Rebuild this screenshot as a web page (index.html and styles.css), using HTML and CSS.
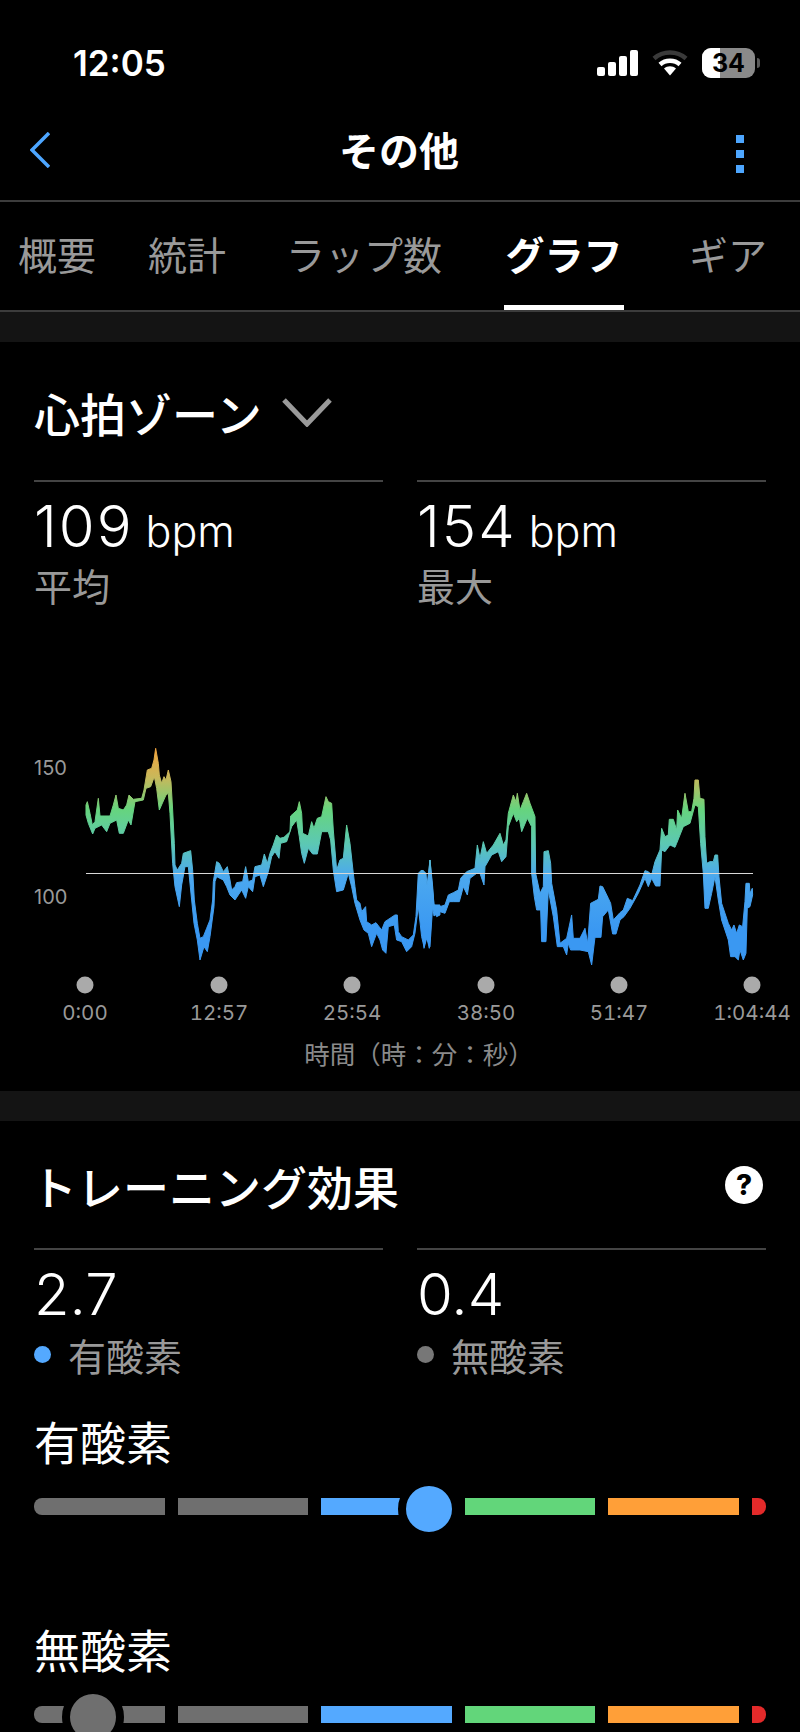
FILE: index.html
```html
<!DOCTYPE html>
<html lang="ja">
<head>
	<meta charset="UTF-8">
	<title>その他</title>
	<link rel="stylesheet" href="styles.css">
</head>
<body>
	<div class="status">
		<span class="clock">12:05</span>
		<div class="status-icons">
			<svg class="signal" width="42" height="26" viewBox="0 0 42 26">
				<rect x="0" y="17" width="8" height="9" rx="2"/>
				<rect x="11" y="12" width="8" height="14" rx="2"/>
				<rect x="22" y="6" width="8" height="20" rx="2"/>
				<rect x="33" y="0" width="8" height="26" rx="2"/>
			</svg>
			<svg class="wifi" width="36" height="26" viewBox="0 0 36 26">
				<path d="M2 8.500C11 0.500 25 0.500 34 8.500" fill="none" stroke="#3a3a3a" stroke-width="4.500"/>
				<path d="M8 14.500C13.500 9.500 22.500 9.500 28 14.500" fill="none" stroke="#fff" stroke-width="4.500"/>
				<path d="M12 18.500C15.500 15.500 20.500 15.500 24 18.500L18 25.500Z" fill="#fff"/>
			</svg>
			<div class="battery">
				<div class="battery-fill"></div>
				<span class="battery-num">34</span>
			</div>
			<div class="battery-cap"></div>
		</div>
	</div>

	<div class="nav">
		<svg class="back" width="20" height="36" viewBox="0 0 20 36">
			<path d="M19 1L2 18L19 35" fill="none" stroke="#4da6ff" stroke-width="3.500"/>
		</svg>
		<span class="nav-title">その他</span>
		<div class="more">
			<span></span>
			<span></span>
			<span></span>
		</div>
	</div>

	<div class="tabs">
		<span class="tab">概要</span>
		<span class="tab tab-stats">統計</span>
		<span class="tab">ラップ数</span>
		<span class="tab active">グラフ</span>
		<span class="tab tab-gear">ギア</span>
	</div>

	<div class="band"></div>

	<section class="card">
		<div class="card-title heart-title">
			<span>心拍ゾーン</span>
			<svg width="50" height="30" viewBox="0 0 50 30">
				<path d="M2 3L25 27L48 3" fill="none" stroke="#9a9a9a" stroke-width="5"/>
			</svg>
		</div>
		<div class="stats">
			<div class="stat">
				<div class="value value-bpm">109<span class="unit">bpm</span></div>
				<div class="label">平均</div>
			</div>
			<div class="stat">
				<div class="value value-bpm">154<span class="unit">bpm</span></div>
				<div class="label">最大</div>
			</div>
		</div>
	</section>

	<svg class="chart" width="800" height="433" viewBox="0 607 800 433">
		<defs>
			<linearGradient id="hr" gradientUnits="userSpaceOnUse" x1="0" y1="50" x2="0" y2="700">
				<stop offset="0" stop-color="#f5a33c"/>
				<stop offset="0.14" stop-color="#c9b85a"/>
				<stop offset="0.29" stop-color="#66d47e"/>
				<stop offset="0.45" stop-color="#5cc8b4"/>
				<stop offset="0.6" stop-color="#4ba8ef"/>
				<stop offset="0.85" stop-color="#3a98f2"/>
			</linearGradient>
		</defs>
		<text class="axis-y" x="34" y="775">150</text>
		<text class="axis-y" x="34" y="904">100</text>
		<g transform="translate(60 730) scale(0.3333)">
			<polygon class="trace" points="78,225 82,215 90,250 97,285 105,275 115,205 120,258 135,258 150,258 160,225 168,195 175,235 190,240 200,225 207,195 220,208 245,205 252,180 262,120 275,115 282,90 287,55 295,100 298,135 305,160 312,140 318,150 325,120 333,155 338,240 343,340 345,405 352,420 365,400 370,370 392,362 398,420 403,510 412,580 420,625 430,620 440,595 450,570 458,510 460,455 470,395 478,400 490,425 502,410 510,450 515,480 525,470 530,458 548,455 557,410 565,455 578,450 585,410 605,405 613,372 622,400 630,370 640,345 650,315 660,325 672,322 690,305 692,258 712,240 718,215 725,250 728,310 745,318 755,275 762,295 772,265 785,260 798,200 805,215 815,220 820,300 825,360 830,420 840,390 850,385 860,285 870,340 880,430 885,470 890,510 900,520 905,545 917,530 920,575 935,585 948,578 965,600 975,575 1005,555 1012,555 1015,605 1025,620 1045,630 1060,615 1068,560 1075,430 1085,420 1095,430 1100,480 1110,390 1118,480 1122,525 1140,525 1140,555 1130,560 1118,530 1112,620 1108,655 1100,620 1092,650 1085,620 1075,530 1065,610 1055,650 1040,665 1025,635 1010,630 1003,585 985,590 978,670 968,660 960,630 950,610 935,650 925,610 912,600 900,570 885,520 875,470 865,430 850,480 830,485 820,420 812,330 805,305 785,305 772,372 758,372 745,355 733,400 725,370 718,320 710,270 695,290 680,335 662,340 657,385 645,365 635,380 625,425 610,470 600,435 585,440 578,485 565,470 557,505 545,480 525,510 510,495 500,470 490,450 470,440 465,455 462,530 450,620 442,665 432,650 420,690 412,630 402,580 395,510 385,410 375,410 365,465 358,530 345,470 338,400 330,250 325,190 318,195 298,240 290,175 283,140 272,170 258,175 250,210 225,215 213,285 205,270 190,310 178,310 170,270 150,280 140,305 125,285 105,295 98,312 85,280 78,255"/>
		</g>
		<g transform="translate(420 730) scale(0.3333)">
			<polygon class="trace" points="0,430 8,420 18,430 22,480 30,390 38,470 42,525 60,530 75,525 85,495 100,488 115,480 122,445 140,425 165,415 172,345 180,385 190,335 200,370 220,345 240,310 250,345 258,330 265,250 280,195 288,215 292,190 300,240 310,215 320,190 330,220 345,260 347,430 360,490 370,470 372,365 385,362 392,400 395,460 410,540 420,640 440,625 455,555 460,625 480,625 495,595 503,640 512,520 535,508 540,468 548,470 565,505 572,520 580,570 600,548 610,540 622,505 638,512 660,465 675,422 685,425 695,435 705,395 720,360 725,295 735,320 745,315 748,268 760,268 770,300 773,240 785,265 795,190 805,245 815,245 822,205 825,150 835,150 840,205 852,208 855,320 860,400 870,395 880,395 885,375 893,375 897,440 905,520 925,580 935,600 942,585 950,610 958,585 968,590 975,515 978,460 988,460 990,490 997,475 998,495 990,530 982,535 978,670 970,690 960,660 955,690 945,680 932,680 925,630 905,570 895,510 885,440 875,490 865,535 855,535 850,430 842,340 835,230 825,225 810,280 790,290 770,340 765,352 750,345 735,365 725,360 720,468 707,468 695,445 685,470 675,445 655,490 630,535 612,560 600,570 588,612 578,612 565,540 548,560 543,622 525,622 515,705 505,665 480,660 465,660 452,660 445,640 440,675 430,650 412,650 400,560 385,480 378,635 365,635 362,540 350,540 343,500 335,430 335,290 322,265 305,305 298,265 290,275 280,250 265,290 258,380 245,395 235,365 215,375 195,410 192,465 180,430 170,430 150,445 142,495 130,470 118,515 100,515 88,515 75,550 60,545 42,558 35,510 30,650 20,625 12,655 5,500 0,500"/>
		</g>
		<line class="avg" x1="86" y1="873.500" x2="753" y2="873.500"/>
		<circle class="tick" cx="85" cy="985" r="8.500"/>
		<circle class="tick" cx="219" cy="985" r="8.500"/>
		<circle class="tick" cx="352" cy="985" r="8.500"/>
		<circle class="tick" cx="486" cy="985" r="8.500"/>
		<circle class="tick" cx="619" cy="985" r="8.500"/>
		<circle class="tick" cx="752" cy="985" r="8.500"/>
		<text class="axis-x" x="85" y="1020">0:00</text>
		<text class="axis-x" x="219" y="1020">12:57</text>
		<text class="axis-x" x="352" y="1020">25:54</text>
		<text class="axis-x" x="486" y="1020">38:50</text>
		<text class="axis-x" x="619" y="1020">51:47</text>
		<text class="axis-x" x="752" y="1020">1:04:44</text>
	</svg>
	<div class="caption">時間（時：分：秒）</div>

	<div class="band"></div>

	<section class="card">
		<div class="card-title training-title">
			<span>トレーニング効果</span>
			<span class="help">?</span>
		</div>
		<div class="stats">
			<div class="stat">
				<div class="value">2.7</div>
				<div class="label label-dot"><i class="dot dot-blue"></i>有酸素</div>
			</div>
			<div class="stat">
				<div class="value">0.4</div>
				<div class="label label-dot"><i class="dot dot-gray"></i>無酸素</div>
			</div>
		</div>

		<div class="effect-name">有酸素</div>
		<div class="bar">
			<div class="seg seg-first gray"></div>
			<div class="seg gray"></div>
			<div class="seg blue"></div>
			<div class="seg green"></div>
			<div class="seg orange"></div>
			<div class="seg seg-last red"></div>
			<div class="knob knob-aerobic"></div>
		</div>

		<div class="effect-name">無酸素</div>
		<div class="bar">
			<div class="seg seg-first gray"></div>
			<div class="seg gray"></div>
			<div class="seg blue"></div>
			<div class="seg green"></div>
			<div class="seg orange"></div>
			<div class="seg seg-last red"></div>
			<div class="knob knob-anaerobic"></div>
		</div>
	</section>
</body>
</html>
```

FILE: styles.css
```css
html, body {
	margin: 0;
	padding: 0;
}
body {
	width: 800px;
	height: 1732px;
	overflow: hidden;
	background-color: #000;
	color: #fff;
	font-family: Inter, "Noto Sans CJK JP", sans-serif;
}
.status {
	height: 74px;
	padding: 26px 40px 0 73px;
	display: flex;
	align-items: center;
	justify-content: space-between;
}
.clock {
	font-size: 35px;
	font-weight: 600;
}
.status-icons {
	display: flex;
	align-items: center;
}
.signal rect {
	fill: #fff;
}
.wifi {
	margin-left: 13px;
}
.battery {
	position: relative;
	width: 53px;
	height: 30px;
	margin-left: 14px;
	border-radius: 9px;
	background-color: #8a8a8a;
	overflow: hidden;
	text-align: center;
}
.battery-fill {
	position: absolute;
	left: 0;
	top: 0;
	bottom: 0;
	width: 18px;
	background-color: #fff;
}
.battery-num {
	position: relative;
	color: #000;
	font-size: 25px;
	font-weight: 700;
	line-height: 30px;
}
.battery-cap {
	width: 3px;
	height: 10px;
	margin-left: 2px;
	border-radius: 0 3px 3px 0;
	background-color: #5a5a5a;
}
.nav {
	height: 100px;
	padding: 0 56px 0 30px;
	display: flex;
	align-items: center;
	justify-content: space-between;
	border-bottom: 2px solid #3c3c3c;
}
.nav-title {
	margin-top: 4px;
	margin-left: 12px;
	font-size: 40px;
	font-weight: 700;
	line-height: 96px;
}
.more {
	display: flex;
	flex-direction: column;
	gap: 7px;
	margin-top: 8px;
}
.more span {
	display: block;
	width: 8px;
	height: 8px;
	background-color: #4da6ff;
}
.tabs {
	height: 108px;
	padding-left: 18px;
	display: flex;
	gap: 60px;
	border-bottom: 2px solid #3c3c3c;
}
.tab {
	font-size: 39px;
	line-height: 108px;
	color: #999;
	white-space: nowrap;
}
.tab-stats {
	margin-left: -8px;
}
.tab-gear {
	margin-left: 5px;
}
.tab.active {
	width: 120px;
	margin-left: 2px;
	text-align: center;
	color: #fff;
	font-weight: 700;
	border-bottom: 5px solid #fff;
	height: 103px;
	line-height: 108px;
}
.band {
	height: 30px;
	background-color: #141414;
}
.card {
	padding: 0 34px;
}
.card-title {
	display: flex;
	align-items: center;
	height: 60px;
	font-size: 46px;
	font-weight: 500;
	white-space: nowrap;
}
.heart-title {
	margin-top: 40px;
	margin-bottom: 38px;
	gap: 20px;
}
.training-title {
	margin-top: 34px;
	margin-bottom: 33px;
	margin-left: -3px;
	padding-right: 3px;
	justify-content: space-between;
}
.help {
	width: 38px;
	height: 38px;
	border-radius: 50%;
	background-color: #fff;
	color: #000;
	font-size: 28px;
	font-weight: 800;
	line-height: 38px;
	text-align: center;
}
.stats {
	display: grid;
	grid-template-columns: 1fr 1fr;
	column-gap: 34px;
}
.stat {
	border-top: 2px solid #444;
	padding-top: 9px;
}
.value {
	height: 70px;
	font-size: 58px;
	font-weight: 300;
	line-height: 70px;
	white-space: nowrap;
}
.value-bpm {
	letter-spacing: 2px;
}
.unit {
	margin-left: 12px;
	font-size: 43px;
	font-weight: 300;
	letter-spacing: 0;
}
.label {
	display: flex;
	align-items: center;
	height: 40px;
	margin-top: 3px;
	margin-bottom: 3px;
	font-size: 38px;
	color: #999;
}
.label-dot {
	margin-top: 5px;
	margin-bottom: 0;
}
.dot {
	width: 17px;
	height: 17px;
	margin-right: 17px;
	border-radius: 50%;
}
.dot-blue {
	background-color: #54a9ff;
}
.dot-gray {
	background-color: #777;
}
.chart {
	display: block;
}
.trace {
	fill: url(#hr);
	stroke: url(#hr);
	stroke-width: 3;
}
.axis-y {
	font-size: 20px;
	fill: #999;
}
.axis-x {
	font-size: 20.500px;
	font-variant-numeric: tabular-nums;
	text-anchor: middle;
	fill: #999;
}
.avg {
	stroke: #d8d8d8;
	stroke-width: 1.200;
}
.tick {
	fill: #aaa;
}
.caption {
	height: 30px;
	margin-bottom: 21px;
	padding-left: 38px;
	font-size: 25.500px;
	line-height: 30px;
	color: #8a8a8a;
	text-align: center;
}
.effect-name {
	height: 60px;
	margin-top: 39px;
	margin-bottom: 25px;
	font-size: 46px;
	line-height: 60px;
}
.bar + .effect-name {
	margin-top: 106px;
}
.bar {
	position: relative;
	display: flex;
	gap: 13px;
	height: 17px;
}
.seg {
	flex: 1;
}
.seg-first {
	border-radius: 8px 0 0 8px;
}
.seg-last {
	flex: none;
	width: 14px;
	border-radius: 0 8px 8px 0;
}
.gray {
	background-color: #6f6f6f;
}
.blue {
	background-color: #54a9ff;
}
.green {
	background-color: #62d67a;
}
.orange {
	background-color: #ff9f38;
}
.red {
	background-color: #e32a2a;
}
.knob {
	position: absolute;
	top: calc(50% + 2px);
	width: 46px;
	height: 46px;
	border: 8px solid #000;
	border-radius: 50%;
	transform: translate(-50%, -50%);
}
.knob-aerobic {
	left: 395px;
	background-color: #54a9ff;
}
.knob-anaerobic {
	left: 59px;
	background-color: #6f6f6f;
}
```
